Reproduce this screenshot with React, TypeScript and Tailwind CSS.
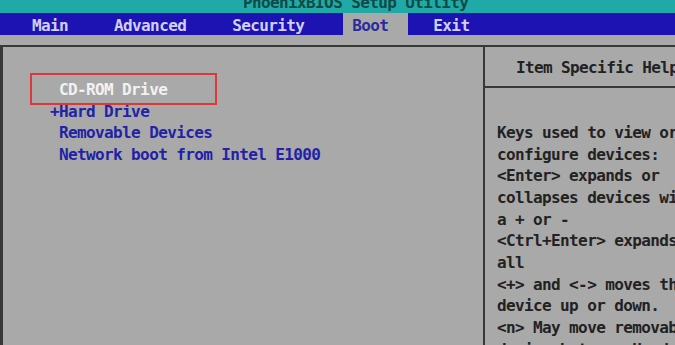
import React from "react";

const helpLines = [
  "Keys used to view or",
  "configure devices:",
  "<Enter> expands or",
  "collapses devices with",
  "a + or -",
  "<Ctrl+Enter> expands",
  "all",
  "<+> and <-> moves the",
  "device up or down.",
  "<n> May move removable",
  "device between Hard",
];

export default function App() {
  return (
    <div
      className="relative w-[675px] h-[345px] overflow-hidden bg-[#a9a9a9] flex flex-col font-bold text-[16px] tracking-[-0.62px]"
      style={{ fontFamily: '"DejaVu Sans Mono", "Liberation Mono", monospace' }}
    >
      {/* Title bar */}
      <div className="h-[13px] shrink-0 bg-[#1faaa7] overflow-hidden">
        <div className="pl-[243px] -mt-[6px] leading-[18px] text-[#0f4a48] whitespace-nowrap">
          PhoenixBIOS Setup Utility
        </div>
      </div>

      {/* Menu bar */}
      <div className="h-[22px] shrink-0 bg-[#1d12b2] flex items-stretch text-[#cfcff7] leading-[22px] whitespace-nowrap">
        <div className="pl-[32px] pt-[2px]">Main</div>
        <div className="pl-[46px] pt-[2px]">Advanced</div>
        <div className="pl-[46px] pt-[2px]">Security</div>
        <div className="ml-[39px] bg-[#a9a9a9] pl-[9px] pr-[20px] pt-[2px] text-[#2a2aa0]">Boot</div>
        <div className="pl-[25px] pt-[2px]">Exit</div>
      </div>

      {/* Gap strip */}
      <div className="h-[10px] shrink-0" />

      {/* Frame */}
      <div className="flex-1 flex border-t-2 border-l-[3px] border-[#383838]">
        {/* Left panel */}
        <div className="relative w-[480px] shrink-0 pt-[32px] leading-[21.6px] whitespace-nowrap">
          <div className="pl-[56px] text-[#f2f2f2]">CD-ROM Drive</div>
          <div className="pl-[47px] text-[#2222a6]">+Hard Drive</div>
          <div className="pl-[56px] text-[#2222a6]">Removable Devices</div>
          <div className="pl-[56px] text-[#2222a6]">Network boot from Intel E1000</div>
          {/* red annotation box */}
          <div className="absolute left-[27px] top-[26px] w-[187px] h-[32px] border-2 border-[#e0383a]" />
        </div>

        {/* Right panel */}
        <div className="flex-1 flex flex-col border-l-[2px] border-[#383838] overflow-hidden whitespace-nowrap text-[#222222]">
          <div className="h-[41px] shrink-0 flex items-center pl-[31px] pt-[3px] border-b-2 border-[#383838]">
            Item Specific Help
          </div>
          <div className="pt-[34px] pl-[12px] leading-[21.65px]">
            {helpLines.map((l) => (
              <div key={l}>{l}</div>
            ))}
          </div>
        </div>
      </div>
    </div>
  );
}
